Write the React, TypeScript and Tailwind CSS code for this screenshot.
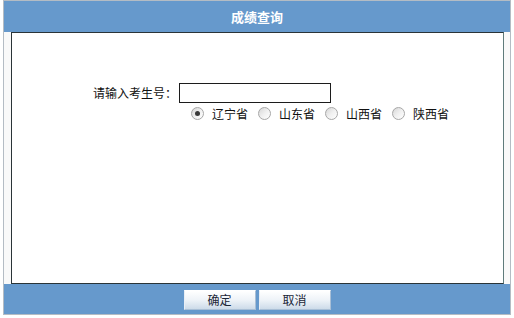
import * as React from "react";

const provinces = [
  { name: "辽宁省", checked: true },
  { name: "山东省", checked: false },
  { name: "山西省", checked: false },
  { name: "陕西省", checked: false },
];

function Radio({ checked }: { checked: boolean }) {
  return (
    <span className="relative flex h-[13px] w-[13px] items-center justify-center rounded-full border border-[#a7a7a7] bg-gradient-to-br from-[#d6d6d6] via-[#f0f0f0] to-white">
      {checked && <span className="h-[5px] w-[5px] rounded-full bg-[#3a3a3a]" />}
    </span>
  );
}

function Btn({ children }: { children: React.ReactNode }) {
  return (
    <button className="flex h-[20px] w-[72px] items-center justify-center border border-t-white border-l-[#e8eef5] border-r-[#a9bfd6] border-b-[#a9bfd6] bg-gradient-to-b from-white via-[#eef3f8] to-[#cddbe9] text-[12px] leading-none text-[#1b2637]">
      {children}
    </button>
  );
}

export default function App() {
  return (
    <div
      className="h-[318px] w-[514px] bg-white"
      style={{ fontFamily: '"Noto Sans CJK SC", "Liberation Sans", sans-serif' }}
    >
      <div className="mx-[3px] flex flex-col border border-[#b4bcc4]">
        <div className="flex h-[31px] items-center justify-center bg-[#6699cc] text-[13px] font-bold text-white">
          成绩查询
        </div>

        <div className="bg-[#f9f9f9] pl-[7px] pr-[6px]">
          <div className="h-[252px] border border-[#2a3438] border-r-[#5f7b7b] bg-white pl-[81px] pt-[50px]">
            <div className="flex items-center">
              <span className="w-[84px] text-[12px] leading-none text-[#111]">请输入考生号：</span>
              <div className="ml-[2px] h-[20px] w-[152px] border border-[#1c1c1c] bg-white" />
            </div>
            <div className="mt-[4px] flex items-center pl-[98px]">
              {provinces.map((p) => (
                <label key={p.name} className="mr-[10px] flex items-center">
                  <Radio checked={p.checked} />
                  <span className="ml-[8px] text-[12px] leading-none text-[#111]">{p.name}</span>
                </label>
              ))}
            </div>
          </div>
        </div>

        <div className="flex h-[30px] items-center justify-center gap-[3px] bg-[#6699cc] pt-[1px]">
          <Btn>确定</Btn>
          <Btn>取消</Btn>
        </div>
      </div>
    </div>
  );
}
